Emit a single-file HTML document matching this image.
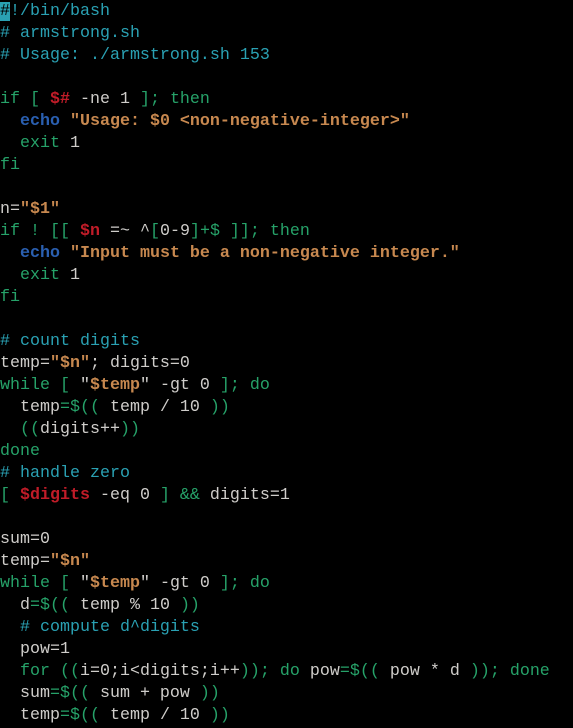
<!DOCTYPE html>
<html><head><style>
html,body{margin:0;padding:0;background:#000;width:573px;height:728px;overflow:hidden}
pre{margin:0;padding:0;font-family:"Liberation Mono",monospace;font-size:16.67px;line-height:22px;color:#cfcdca;position:relative;top:1px}
.c{color:#2aa1b3}.k{color:#26a269}.r{color:#c01c28;font-weight:bold}.s{color:#c7884f;font-weight:bold}.b{color:#2a5fb0;font-weight:bold}
.cur{background:#2aa1b3;color:#000}
</style></head><body><pre><span class="cur">#</span><span class="c">!/bin/bash</span>
<span class="c"># armstrong.sh</span>
<span class="c"># Usage: ./armstrong.sh 153</span>

<span class="k">if [</span> <span class="r">$#</span> -ne 1 <span class="k">]; then</span>
  <span class="b">echo</span> <span class="s">"Usage: $0 &lt;non-negative-integer&gt;"</span>
  <span class="k">exit</span> 1
<span class="k">fi</span>

n=<span class="s">"$1"</span>
<span class="k">if ! [[</span> <span class="r">$n</span> =~ ^<span class="k">[</span>0-9<span class="k">]+$ ]]; then</span>
  <span class="b">echo</span> <span class="s">"Input must be a non-negative integer."</span>
  <span class="k">exit</span> 1
<span class="k">fi</span>

<span class="c"># count digits</span>
temp=<span class="s">"$n"</span>; digits=0
<span class="k">while [</span> "<span class="s">$temp</span>" -gt 0 <span class="k">]; do</span>
  temp<span class="k">=$((</span> temp / 10 <span class="k">))</span>
  <span class="k">((</span>digits++<span class="k">))</span>
<span class="k">done</span>
<span class="c"># handle zero</span>
<span class="k">[</span> <span class="r">$digits</span> -eq 0 <span class="k">] &amp;&amp;</span> digits=1

sum=0
temp=<span class="s">"$n"</span>
<span class="k">while [</span> "<span class="s">$temp</span>" -gt 0 <span class="k">]; do</span>
  d<span class="k">=$((</span> temp % 10 <span class="k">))</span>
  <span class="c"># compute d^digits</span>
  pow=1
  <span class="k">for ((</span>i=0;i&lt;digits;i++<span class="k">)); do</span> pow<span class="k">=$((</span> pow * d <span class="k">)); done</span>
  sum<span class="k">=$((</span> sum + pow <span class="k">))</span>
  temp<span class="k">=$((</span> temp / 10 <span class="k">))</span>
</pre></body></html>
